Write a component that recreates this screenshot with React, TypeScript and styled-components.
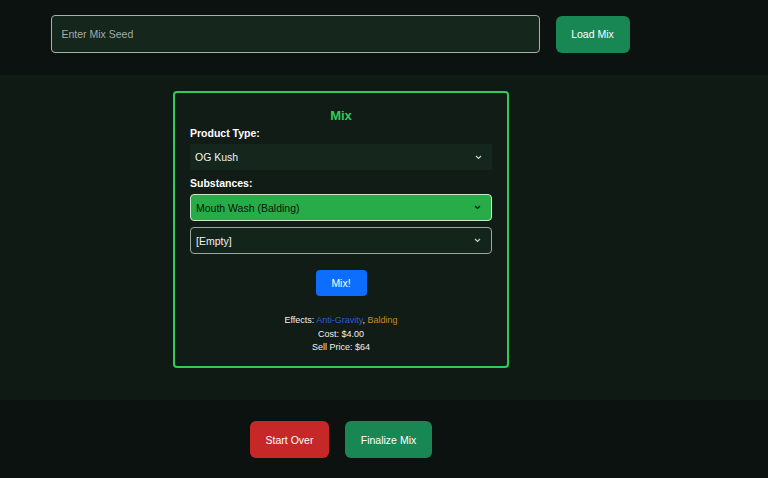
import React from "react";
import styled, { createGlobalStyle } from "styled-components";

const Global = createGlobalStyle`
  html, body { margin: 0; padding: 0; background: #0b120f; }
  body { font-family: "Liberation Sans", Arial, sans-serif; color: #fff; }
  * { box-sizing: border-box; }
`;

const Page = styled.div`
  width: 768px;
  height: 478px;
  display: flex;
  flex-direction: column;
  background: #0b120f;
`;

const Band = styled.section<{ $bg: string; $h: number; $pt: number; $pr?: number }>`
  height: ${(p) => p.$h}px;
  background: ${(p) => p.$bg};
  padding-top: ${(p) => p.$pt}px;
  padding-right: ${(p) => p.$pr ?? 86}px;
  display: flex;
  justify-content: center;
  align-items: flex-start;
`;

const Row = styled.div<{ $gap: number }>`
  display: flex;
  align-items: center;
  gap: ${(p) => p.$gap}px;
`;

const SeedInput = styled.input`
  width: 489px;
  height: 38px;
  background: #15261d;
  border: 1px solid #a7b0ab;
  border-radius: 4px;
  color: #fff;
  font-family: inherit;
  font-size: 10.5px;
  padding: 0 10px;
  outline: none;
  &::placeholder { color: #a3aca7; }
`;

const Button = styled.button<{ $bg: string; $w: number; $h: number; $r?: number }>`
  width: ${(p) => p.$w}px;
  height: ${(p) => p.$h}px;
  background: ${(p) => p.$bg};
  border: none;
  border-radius: ${(p) => p.$r ?? 6}px;
  color: #fff;
  font-family: inherit;
  font-size: 10.5px;
  padding: 0;
  cursor: pointer;
`;

const Card = styled.div`
  width: 336px;
  height: 277px;
  background: #111c17;
  border: 2px solid #2fcc5a;
  border-radius: 4px;
  padding: 14px 15px 0;
  display: flex;
  flex-direction: column;
`;

const Title = styled.h3`
  margin: 0;
  text-align: center;
  color: #2fcc5a;
  font-size: 13px;
  font-weight: bold;
  line-height: 18px;
`;

const Label = styled.div<{ $mt: number }>`
  margin-top: ${(p) => p.$mt}px;
  font-size: 10.5px;
  font-weight: bold;
  color: #fff;
  line-height: 14px;
`;

type Variant = "plain" | "active" | "outline";

const SelectBox = styled.div<{ $v: Variant; $mt: number }>`
  margin-top: ${(p) => p.$mt}px;
  height: ${(p) => (p.$v === "plain" ? 26 : 27)}px;
  display: flex;
  align-items: center;
  justify-content: space-between;
  padding: 0 10px 0 5px;
  font-size: 10.5px;
  border-radius: ${(p) => (p.$v === "plain" ? 0 : 4)}px;
  background: ${(p) => (p.$v === "active" ? "#28ac47" : p.$v === "outline" ? "#13241b" : "#15261d")};
  border: ${(p) => (p.$v === "active" ? "1px solid #c9e6cf" : p.$v === "outline" ? "1px solid #9aa8a0" : "none")};
  color: ${(p) => (p.$v === "active" ? "#06140b" : "#f2f2f2")};
`;

const MixRow = styled.div`
  display: flex;
  justify-content: center;
  margin-top: 16px;
`;

const Stats = styled.div`
  margin-top: 18px;
  text-align: center;
  font-size: 9px;
  line-height: 13.5px;
  color: #f0f0f0;
`;

const Effect = styled.span<{ $c: string }>`
  color: ${(p) => p.$c};
`;

const Chevron = ({ dark }: { dark?: boolean }) => (
  <svg width="7" height="5" viewBox="0 0 7 5" fill="none">
    <path d="M1 1l2.5 2.5L6 1" stroke={dark ? "#0a1a0f" : "#c8d0cc"} strokeWidth="1.2" />
  </svg>
);

export default function App() {
  return (
    <Page>
      <Global />
      <Band $bg="#0b120f" $h={75} $pt={15} $pr={88}>
        <Row $gap={16}>
          <SeedInput placeholder="Enter Mix Seed" />
          <Button $bg="#198754" $w={74} $h={37}>Load Mix</Button>
        </Row>
      </Band>
      <Band $bg="#0f1a14" $h={325} $pt={16}>
        <Card>
          <Title>Mix</Title>
          <Label $mt={1}>Product Type:</Label>
          <SelectBox $v="plain" $mt={4}>
            <span>OG Kush</span>
            <Chevron />
          </SelectBox>
          <Label $mt={6}>Substances:</Label>
          <SelectBox $v="active" $mt={4}>
            <span>Mouth Wash (Balding)</span>
            <Chevron dark />
          </SelectBox>
          <SelectBox $v="outline" $mt={6}>
            <span>[Empty]</span>
            <Chevron />
          </SelectBox>
          <MixRow>
            <Button $bg="#0d6efd" $w={51} $h={26} $r={4}>Mix!</Button>
          </MixRow>
          <Stats>
            <div>
              Effects: <Effect $c="#2f5fc4">Anti-Gravity</Effect>, <Effect $c="#c18b2f">Balding</Effect>
            </div>
            <div>Cost: $4.00</div>
            <div>Sell Price: $64</div>
          </Stats>
        </Card>
      </Band>
      <Band $bg="#0b120f" $h={78} $pt={21}>
        <Row $gap={16}>
          <Button $bg="#c62828" $w={79} $h={37}>Start Over</Button>
          <Button $bg="#198754" $w={87} $h={37}>Finalize Mix</Button>
        </Row>
      </Band>
    </Page>
  );
}
